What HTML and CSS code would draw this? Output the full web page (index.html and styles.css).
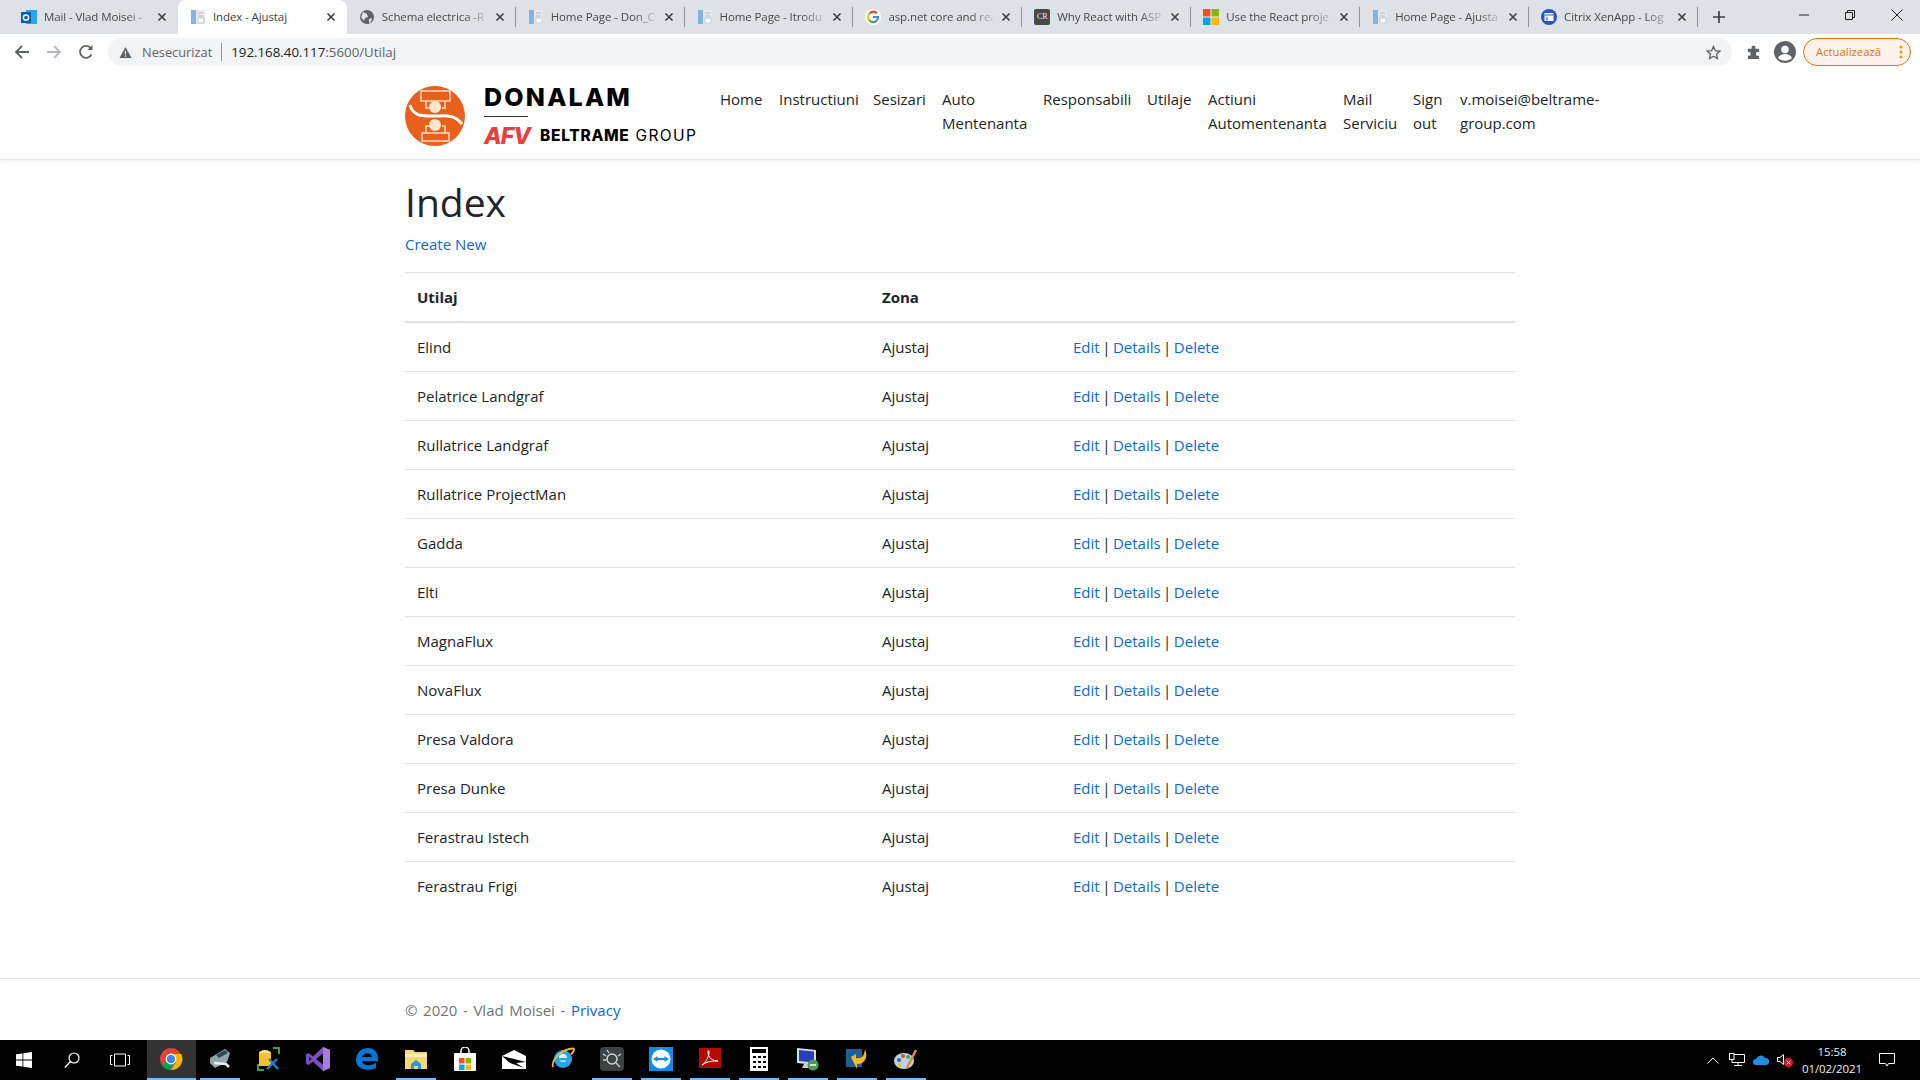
FILE: index.html
```html
<!DOCTYPE html>
<html lang="ro">
<head>
<meta charset="utf-8">
<title>Index - Ajustaj</title>
<link rel="stylesheet" href="styles.css">
</head>
<body>
<svg class="defs" width="0" height="0" aria-hidden="true">
  <symbol id="doc" viewBox="0 0 16 16">
    <rect x="1" y="1" width="5" height="14" fill="#7fb5e6"/>
    <rect x="6" y="1" width="9" height="14" fill="#e6e8eb"/>
    <path d="M8 4h5M8 7h5" stroke="#b9bec4" fill="none"/>
    <rect x="8" y="9" width="6" height="5" fill="#fff" stroke="#c4c8cd"/>
  </symbol>
  <symbol id="x" viewBox="0 0 10 10">
    <path d="M1.5 1.5l7 7M8.5 1.5l-7 7" stroke="#3c4043" stroke-width="1.6" fill="none"/>
  </symbol>
</svg>
<div class="screen">
  <header class="browser">
    <div class="tabstrip">
      <div class="tab">
        <svg class="favicon" viewBox="0 0 16 16"><rect x="5" y="1" width="11" height="14" fill="#28a8ea"/><rect x="0" y="3" width="10" height="11" fill="#0a5ea8"/><circle cx="5" cy="8.5" r="2.6" fill="none" stroke="#fff" stroke-width="1.5"/></svg>
        <span class="tab-title">Mail - Vlad Moisei -</span>
        <svg class="tab-close"><use href="#x"/></svg>
      </div>
      <div class="tab tab-active">
        <svg class="favicon"><use href="#doc"/></svg>
        <span class="tab-title plain">Index - Ajustaj</span>
        <svg class="tab-close"><use href="#x"/></svg>
      </div>
      <div class="tab tab-sep">
        <svg class="favicon" viewBox="0 0 16 16"><circle cx="8" cy="8" r="7" fill="#5f6368"/><path d="M4 3l4 2 1 3-3 1-1 3-3-4zM10 10l3-1-1 4-2 1z" fill="#dee1e6"/></svg>
        <span class="tab-title">Schema electrica -R</span>
        <svg class="tab-close"><use href="#x"/></svg>
      </div>
      <div class="tab tab-sep">
        <svg class="favicon"><use href="#doc"/></svg>
        <span class="tab-title">Home Page - Don_C</span>
        <svg class="tab-close"><use href="#x"/></svg>
      </div>
      <div class="tab tab-sep">
        <svg class="favicon"><use href="#doc"/></svg>
        <span class="tab-title">Home Page - Itrodu</span>
        <svg class="tab-close"><use href="#x"/></svg>
      </div>
      <div class="tab tab-sep">
        <svg class="favicon" viewBox="0 0 16 16"><circle cx="8" cy="8" r="8" fill="#fff"/><path d="M12 4.2A5 5 0 0 0 4.4 4.6" stroke="#ea4335" stroke-width="2.2" fill="none"/><path d="M4.4 4.6a5 5 0 0 0 0 6.8" stroke="#fbbc05" stroke-width="2.2" fill="none"/><path d="M4.4 11.4a5 5 0 0 0 7.4.2" stroke="#34a853" stroke-width="2.2" fill="none"/><path d="M8 8h5a5 5 0 0 1-1.2 3.6" stroke="#4285f4" stroke-width="2.2" fill="none"/></svg>
        <span class="tab-title">asp.net core and rea</span>
        <svg class="tab-close"><use href="#x"/></svg>
      </div>
      <div class="tab tab-sep">
        <span class="favicon fav-cr">CR</span>
        <span class="tab-title">Why React with ASP</span>
        <svg class="tab-close"><use href="#x"/></svg>
      </div>
      <div class="tab tab-sep">
        <svg class="favicon" viewBox="0 0 16 16"><rect width="7.4" height="7.4" fill="#f25022"/><rect x="8.6" width="7.4" height="7.4" fill="#7fba00"/><rect y="8.6" width="7.4" height="7.4" fill="#00a4ef"/><rect x="8.6" y="8.6" width="7.4" height="7.4" fill="#ffb900"/></svg>
        <span class="tab-title">Use the React proje</span>
        <svg class="tab-close"><use href="#x"/></svg>
      </div>
      <div class="tab tab-sep">
        <svg class="favicon"><use href="#doc"/></svg>
        <span class="tab-title">Home Page - Ajusta</span>
        <svg class="tab-close"><use href="#x"/></svg>
      </div>
      <div class="tab tab-sep">
        <svg class="favicon" viewBox="0 0 16 16"><circle cx="8" cy="8" r="8" fill="#2456c4"/><rect x="3.5" y="4" width="9" height="8" fill="#fff"/><rect x="3.5" y="5.5" width="9" height="1" fill="#2456c4"/><rect x="5.5" y="7.5" width="1" height="4.5" fill="#2456c4"/></svg>
        <span class="tab-title">Citrix XenApp - Log</span>
        <svg class="tab-close"><use href="#x"/></svg>
      </div>
      <svg class="new-tab" viewBox="0 0 12 12"><path d="M6 0v12M0 6h12" stroke="#3c4043" stroke-width="1.7" fill="none"/></svg>
      <div class="window-controls">
        <svg class="win-btn" viewBox="0 0 12 12"><path d="M1 6h10" stroke="#222" fill="none"/></svg>
        <svg class="win-btn" viewBox="0 0 12 12"><path d="M1.5 3.5h7v7h-7zM3.5 3.5v-2h7v7h-2" stroke="#222" fill="none"/></svg>
        <svg class="win-btn" viewBox="0 0 12 12"><path d="M.5.5l11 11M11.5.5l-11 11" stroke="#222" fill="none"/></svg>
      </div>
    </div>
    <div class="toolbar">
      <svg class="tool-icon" viewBox="0 0 16 16"><path d="M15 8H2M8 2L2 8l6 6" stroke="#5f6368" stroke-width="1.8" fill="none"/></svg>
      <svg class="tool-icon" viewBox="0 0 16 16"><path d="M1 8h13M8 2l6 6-6 6" stroke="#b4b7bb" stroke-width="1.8" fill="none"/></svg>
      <svg class="tool-icon" viewBox="0 0 16 16"><path d="M13.5 10.5A6 6 0 1 1 13 4.5" stroke="#5f6368" stroke-width="1.8" fill="none"/><path d="M14.5 1v5h-5z" fill="#5f6368"/></svg>
      <div class="omnibox">
        <svg class="warn" viewBox="0 0 14 14"><path d="M7 1l6.5 12H.5z" fill="#5f6368"/><path d="M7 5v4M7 10v1.6" stroke="#f1f3f4" stroke-width="1.4"/></svg>
        <span class="insecure">Nesecurizat</span>
        <span class="url">192.168.40.117<span class="url-dim">:5600/Utilaj</span></span>
        <svg class="star" viewBox="0 0 16 16"><path d="M8 1.6l2 4.4 4.8.5-3.6 3.2 1 4.7L8 12l-4.2 2.4 1-4.7L1.200 6.500 6 6z" stroke="#5f6368" stroke-width="1.400" fill="none"/></svg>
      </div>
      <svg class="puzzle" viewBox="0 0 16 16"><path d="M6 2.500a2 2 0 0 1 4 0V4h4v3.500h-1.500a2 2 0 0 0 0 4H14V15H2v-3.500h1a2 2 0 0 0 0-4H2V4h4z" fill="#5f6368"/></svg>
      <svg class="avatar" viewBox="0 0 22 22"><circle cx="11" cy="11" r="11" fill="#5f6368"/><circle cx="11" cy="8.500" r="3.800" fill="#fff"/><path d="M4 17c1.500-3 4-4 7-4s5.500 1 7 4c-3.500 3.500-10.500 3.500-14 0z" fill="#fff"/></svg>
      <div class="update-pill">
        <span>Actualizează</span>
        <svg class="dots" viewBox="0 0 4 16"><circle cx="2" cy="3" r="1.500"/><circle cx="2" cy="8" r="1.500"/><circle cx="2" cy="13" r="1.500"/></svg>
      </div>
    </div>
  </header>

  <div class="page">
    <nav class="navbar">
      <div class="container nav-inner">
        <div class="brand">
          <svg class="brand-mark" viewBox="0 0 60 60">
            <circle cx="30" cy="30" r="30" fill="#e8601c"/>
            <g fill="none" stroke="#ffe6d0" stroke-width="1.400">
              <rect x="16" y="5" width="29" height="10"/>
              <path d="M21 15v7h3M40 15v7h-3"/>
              <rect x="17" y="47" width="27" height="8"/>
              <path d="M21 47v-7h3M40 47v-7h-3"/>
            </g>
            <circle cx="30" cy="21" r="6" fill="#ffe6d0"/>
            <circle cx="30" cy="39" r="6" fill="#ffe6d0"/>
            <path d="M5 19c3 12 14 11 25 11s19-2 27 8" fill="none" stroke="#fff" stroke-width="3"/>
          </svg>
          <div class="brand-text">
            <span class="brand-name">DONALAM</span>
            <span class="brand-rule"></span>
            <div class="brand-group">
              <span class="brand-afv">AFV</span>
              <span class="brand-beltrame">BELTRAME</span>
              <span class="brand-gr">GROUP</span>
            </div>
          </div>
        </div>
        <ul class="nav-list">
          <li>Home</li>
          <li>Instructiuni</li>
          <li>Sesizari</li>
          <li>Auto<br>Mentenanta</li>
          <li>Responsabili</li>
          <li>Utilaje</li>
          <li>Actiuni<br>Automentenanta</li>
          <li>Mail<br>Serviciu</li>
          <li>Sign<br>out</li>
          <li>v.moisei@beltrame-<br>group.com</li>
        </ul>
      </div>
    </nav>

    <main class="container main">
      <h1 class="title">Index</h1>
      <p class="create"><a class="link" href="#">Create New</a></p>
      <table class="table">
        <thead>
          <tr><th class="col-a">Utilaj</th><th class="col-b">Zona</th><th></th></tr>
        </thead>
        <tbody>
          <tr><td>Elind</td><td>Ajustaj</td><td class="actions"><a class="link" href="#">Edit</a> | <a class="link" href="#">Details</a> | <a class="link" href="#">Delete</a></td></tr>
          <tr><td>Pelatrice Landgraf</td><td>Ajustaj</td><td class="actions"><a class="link" href="#">Edit</a> | <a class="link" href="#">Details</a> | <a class="link" href="#">Delete</a></td></tr>
          <tr><td>Rullatrice Landgraf</td><td>Ajustaj</td><td class="actions"><a class="link" href="#">Edit</a> | <a class="link" href="#">Details</a> | <a class="link" href="#">Delete</a></td></tr>
          <tr><td>Rullatrice ProjectMan</td><td>Ajustaj</td><td class="actions"><a class="link" href="#">Edit</a> | <a class="link" href="#">Details</a> | <a class="link" href="#">Delete</a></td></tr>
          <tr><td>Gadda</td><td>Ajustaj</td><td class="actions"><a class="link" href="#">Edit</a> | <a class="link" href="#">Details</a> | <a class="link" href="#">Delete</a></td></tr>
          <tr><td>Elti</td><td>Ajustaj</td><td class="actions"><a class="link" href="#">Edit</a> | <a class="link" href="#">Details</a> | <a class="link" href="#">Delete</a></td></tr>
          <tr><td>MagnaFlux</td><td>Ajustaj</td><td class="actions"><a class="link" href="#">Edit</a> | <a class="link" href="#">Details</a> | <a class="link" href="#">Delete</a></td></tr>
          <tr><td>NovaFlux</td><td>Ajustaj</td><td class="actions"><a class="link" href="#">Edit</a> | <a class="link" href="#">Details</a> | <a class="link" href="#">Delete</a></td></tr>
          <tr><td>Presa Valdora</td><td>Ajustaj</td><td class="actions"><a class="link" href="#">Edit</a> | <a class="link" href="#">Details</a> | <a class="link" href="#">Delete</a></td></tr>
          <tr><td>Presa Dunke</td><td>Ajustaj</td><td class="actions"><a class="link" href="#">Edit</a> | <a class="link" href="#">Details</a> | <a class="link" href="#">Delete</a></td></tr>
          <tr><td>Ferastrau Istech</td><td>Ajustaj</td><td class="actions"><a class="link" href="#">Edit</a> | <a class="link" href="#">Details</a> | <a class="link" href="#">Delete</a></td></tr>
          <tr><td>Ferastrau Frigi</td><td>Ajustaj</td><td class="actions"><a class="link" href="#">Edit</a> | <a class="link" href="#">Details</a> | <a class="link" href="#">Delete</a></td></tr>
        </tbody>
      </table>
    </main>

    <footer class="footer">
      <div class="container">© 2020 - Vlad Moisei - <a class="link" href="#">Privacy</a></div>
    </footer>
  </div>

  <div class="taskbar">
    <div class="task-start">
      <svg class="task-svg-16" viewBox="0 0 16 16"><path d="M0 2.300l6.500-.9v6.200H0zM7.300 1.300L16 0v7.600H7.300zM0 8.400h6.500v6.200L0 13.700zM7.300 8.400H16V16l-8.700-1.300z" fill="#fff"/></svg>
    </div>
    <div class="task-start task-search">
      <svg class="task-svg-16" viewBox="0 0 16 16"><circle cx="10" cy="6" r="5" stroke="#fff" stroke-width="1.200" fill="none"/><path d="M6.500 9.500L.8 15.500" stroke="#fff" stroke-width="1.300"/></svg>
    </div>
    <div class="task-start task-view">
      <svg class="task-svg-20" viewBox="0 0 20 14"><path d="M4.500 1h11v12h-11zM2.500 2.500H.5v9h2M17.500 2.500h2v9h-2" stroke="#fff" fill="none"/></svg>
    </div>
    <div class="task-apps">
      <div class="app app-chrome">
        <svg class="app-icon" viewBox="0 0 24 24"><circle cx="12" cy="12" r="11" fill="#db4437"/><path d="M12 12L2.500 17.500A11 11 0 0 0 12 23l5-11z" fill="#0f9d58"/><path d="M12 7h10.300A11 11 0 0 1 12 23l5-8z" fill="#f4b400"/><circle cx="12" cy="12" r="5.400" fill="#fff"/><circle cx="12" cy="12" r="4.200" fill="#4285f4"/></svg>
      </div>
      <div class="app app-on">
        <svg class="app-icon" viewBox="0 0 24 24"><path d="M2 11L17 2l5 4-3 9-12 6-5-5z" fill="#8fa6a6"/><path d="M8 8l9-5 3 3-9 5z" fill="#37474f"/><path d="M6 16l12 1 3 3" stroke="#e8eeee" stroke-width="2.500" fill="none"/></svg>
      </div>
      <div class="app">
        <svg class="app-icon" viewBox="0 0 24 24"><ellipse cx="8" cy="6" rx="6" ry="3" fill="#ffe082"/><path d="M2 6v13h12V6z" fill="#fbc02d"/><path d="M16 1h6v6M1 17v6h6" stroke="#43a047" stroke-width="2" fill="none"/><path d="M10 22l10-10M12 12l9 10" stroke="#0d8bd9" stroke-width="2.200"/></svg>
      </div>
      <div class="app">
        <svg class="app-icon" viewBox="0 0 24 24"><path d="M17 0l7 3v18l-7 3-10-9.500-4.500 3.500L0 16.500v-9L2.500 6 7 9.500z" fill="#7a4fbf"/><path d="M17 6.500v11L10 12z" fill="#000"/><path d="M3 9.500v5L5.500 12z" fill="#000"/><path d="M17 0l7 3v18l-7 3z" fill="#a77de0"/></svg>
      </div>
      <div class="app">
        <svg class="app-icon" viewBox="0 0 24 24"><path d="M1 13C1 6 6 1 13 1c6 0 10 4 10 11v2H7c.500 4 6 6 14 2v5c-9 4-20 1-20-8zM7 10h10c0-5-9-5-10 0z" fill="#0078d7"/></svg>
      </div>
      <div class="app app-on">
        <svg class="app-icon" viewBox="0 0 24 24"><path d="M1 3h8l2 2h12v17H1z" fill="#f7d774"/><rect x="1" y="7" width="22" height="3" fill="#ffeeb0"/><path d="M7 22v-5l5-4 5 4v5h-3v-3h-4v3z" fill="#1e9be0"/></svg>
      </div>
      <div class="app">
        <svg class="app-icon" viewBox="0 0 24 24"><rect x="1" y="6" width="22" height="18" rx="1" fill="#fff"/><path d="M8 9V4a4 4 0 0 1 8 0v5" stroke="#fff" stroke-width="1.500" fill="none"/><rect x="6" y="11" width="5.500" height="5.500" fill="#f25022"/><rect x="12.500" y="11" width="5.500" height="5.500" fill="#7fba00"/><rect x="6" y="17.500" width="5.500" height="5.500" fill="#00a4ef"/><rect x="12.500" y="17.500" width="5.500" height="5.500" fill="#ffb900"/></svg>
      </div>
      <div class="app">
        <svg class="app-icon" viewBox="0 0 24 24"><path d="M0 9l12-6 12 6v13H0z" fill="#fff"/><path d="M0 9l24 6-10 1 8 5-14-5z" fill="#000"/></svg>
      </div>
      <div class="app">
        <svg class="app-icon" viewBox="0 0 24 24"><circle cx="12" cy="12" r="9" fill="#2aa4e8"/><circle cx="12" cy="11" r="4" fill="#e6f6ff"/><rect x="7" y="11" width="13" height="2.500" fill="#2aa4e8"/><path d="M2 20C0 12 12 2 22 1.500c2 0 1 3-2 6" stroke="#f2b632" stroke-width="1.800" fill="none"/></svg>
      </div>
      <div class="app app-on">
        <svg class="app-icon" viewBox="0 0 24 24"><rect width="24" height="24" rx="4" fill="#3c4345"/><circle cx="12" cy="12" r="5" stroke="#cfd4d6" stroke-width="1.500" fill="none"/><path d="M16 16l4 4M3 7l3 2M3 13h3M7 3l2 3M21 7l-3 2" stroke="#cfd4d6" stroke-width="1.300"/></svg>
      </div>
      <div class="app app-on">
        <svg class="app-icon" viewBox="0 0 24 24"><rect width="24" height="24" fill="#0e8ee9"/><circle cx="12" cy="12" r="9.500" fill="#fff"/><path d="M4 12l4.500-3v2h7V9l4.500 3-4.500 3v-2h-7v2z" fill="#0e8ee9"/></svg>
      </div>
      <div class="app app-on">
        <svg class="app-icon" viewBox="0 0 24 24"><rect x="1" y="1" width="22" height="20" fill="#b30b00"/><path d="M4 18c4-2 7-9 7-13 0-2-1-2-1 0 0 6 5 9 10 9-4 0-11 0-16 4z" stroke="#fff" fill="none"/></svg>
      </div>
      <div class="app app-on">
        <svg class="app-icon" viewBox="0 0 24 24"><rect x="3" width="18" height="24" fill="#fff"/><rect x="5" y="2" width="14" height="4" fill="#000"/><g fill="#000"><rect x="6" y="9" width="3" height="2"/><rect x="11" y="9" width="3" height="2"/><rect x="16" y="9" width="3" height="2"/><rect x="6" y="14" width="3" height="2"/><rect x="11" y="14" width="3" height="2"/><rect x="16" y="14" width="3" height="2"/><rect x="6" y="19" width="3" height="2"/><rect x="11" y="19" width="3" height="2"/><rect x="16" y="19" width="3" height="2"/></g></svg>
      </div>
      <div class="app app-on">
        <svg class="app-icon" viewBox="0 0 24 24"><path d="M1 1l19 2v15L1 16z" fill="#d8dde0"/><path d="M3 3l15 1.500v11L3 14z" fill="#2a3fc4"/><path d="M8 17h8l1 4H6z" fill="#cfd2d4"/><circle cx="17" cy="18" r="5.500" fill="#4c9a5c"/><path d="M14 18h6" stroke="#fff" stroke-width="1.500"/></svg>
      </div>
      <div class="app app-on">
        <svg class="app-icon" viewBox="0 0 24 24"><path d="M1 2h16v18H1z" fill="#1e5f9a"/><path d="M6 10l5-3v4c5 1 8-1 9-9 3 7 1 15-8 15v5z" fill="#f9b81d"/></svg>
      </div>
      <div class="app app-on">
        <svg class="app-icon" viewBox="0 0 24 24"><ellipse cx="10" cy="14" rx="10" ry="8" fill="#bcd3e6"/><circle cx="5" cy="13" r="2" fill="#2a6bc4"/><circle cx="9" cy="9" r="2" fill="#e04b3a"/><circle cx="14" cy="10" r="2" fill="#4aa84f"/><circle cx="6" cy="18" r="2" fill="#f2c331"/><path d="M13 21L22 3" stroke="#d98f3a" stroke-width="2.500"/></svg>
      </div>
    </div>
    <div class="tray">
      <svg class="tray-chevron" viewBox="0 0 12 7"><path d="M.5 6.500L6 1l5.500 5.500" stroke="#fff" fill="none"/></svg>
      <svg class="tray-icon" viewBox="0 0 16 14"><path d="M3 1.500h12.500v8H3zM9 9.500v3M5 12.500h8" stroke="#fff" fill="none"/><rect x=".5" y=".5" width="4.500" height="6" fill="#000" stroke="#fff"/></svg>
      <svg class="tray-icon" viewBox="0 0 16 14"><path d="M3 12a3 3 0 0 1 0-6 5 5 0 0 1 9-1 3.500 3.500 0 0 1 1 7z" fill="#1f8fe0"/></svg>
      <svg class="tray-icon" viewBox="0 0 16 14"><path d="M.5 4.500h2.500l3.500-3v10l-3.500-3H.5z" stroke="#fff" fill="none"/><circle cx="11.500" cy="9.500" r="4.500" fill="#e81123"/><path d="M9.700 7.700l3.600 3.600M13.300 7.700l-3.600 3.600" stroke="#fff"/></svg>
      <div class="clock"><span>15:58</span><span>01/02/2021</span></div>
      <svg class="tray-icon tray-note" viewBox="0 0 16 14"><path d="M.5.500h15v10H9.500L8 13l-1.500-2.500H.5z" stroke="#fff" fill="none"/></svg>
    </div>
  </div>
</div>
</body>
</html>
```
FILE: styles.css
```css
* { box-sizing: border-box; }
html, body { margin: 0; height: 100%; overflow: hidden; }
body {
  font-family: "Open Sans", "Noto Sans", sans-serif;
  font-size: 15px;
  line-height: 24px;
  color: #212529;
  background: #fff;
}
.defs { display: block; height: 0; }
.screen { display: flex; flex-direction: column; height: 1080px; }

/* Browser chrome */
.browser { flex: none; height: 70px; display: flex; flex-direction: column; }
.tabstrip {
  height: 34px;
  background: #dee1e6;
  display: flex;
  align-items: stretch;
  padding-left: 9px;
  font-size: 11.5px;
  letter-spacing: -0.1px;
  color: #45494d;
}
.tab {
  flex: none;
  width: 168.9px;
  display: flex;
  align-items: center;
  padding: 0 11px 0 12px;
  position: relative;
}
.tab-active { background: #fff; border-radius: 8px 8px 0 0; color: #3c4043; }
.tab-sep::after {
  content: "";
  position: absolute;
  right: 0;
  top: 7px;
  height: 20px;
  width: 1px;
  background: #8f9296;
}
.favicon { flex: none; width: 16px; height: 16px; margin-right: 7px; }
.fav-cr {
  background: #47494b;
  color: #e8e8e8;
  font-size: 8px;
  line-height: 16px;
  text-align: center;
  border-radius: 2px;
  letter-spacing: 0;
  font-family: "Liberation Serif", serif;
}
.tab-title {
  flex: 1;
  min-width: 0;
  white-space: nowrap;
  -webkit-mask-image: linear-gradient(90deg, #000 78%, rgba(0, 0, 0, 0.15) 100%);
  mask-image: linear-gradient(90deg, #000 78%, rgba(0, 0, 0, 0.15) 100%);
}
.tab-title.plain { -webkit-mask-image: none; mask-image: none; }
.tab-close { flex: none; width: 10px; height: 10px; margin-left: 8px; }
.new-tab { flex: none; width: 12px; height: 12px; align-self: center; margin-left: 15px; }
.window-controls { margin-left: auto; display: flex; align-items: flex-start; }
.win-btn { width: 12px; height: 12px; margin: 9px 17px 0 17px; }
.window-controls .win-btn:first-child { margin-left: 0; }
.window-controls .win-btn:last-child { margin-right: 17px; margin-left: 18px; }

.toolbar {
  height: 36px;
  background: #fff;
  display: flex;
  align-items: center;
  padding: 0 7px 0 14px;
  font-size: 12.8px;
}
.tool-icon { flex: none; width: 16px; height: 16px; margin-right: 16px; }
.tool-icon:nth-child(3) { margin-right: 14px; }
.omnibox {
  flex: none;
  width: 1624px;
  height: 28px;
  background: #f1f3f4;
  border-radius: 14px;
  display: flex;
  align-items: center;
  padding: 0 10px 0 11px;
}
.warn { flex: none; width: 13px; height: 13px; margin-right: 10px; }
.insecure {
  padding-right: 9px;
  margin-right: 9px;
  border-right: 1px solid #8f9296;
  line-height: 18px;
  color: #5f6368;
}
.url { color: #202124; font-size: 13.3px; }
.url-dim { color: #5f6368; }
.star { flex: none; width: 15px; height: 15px; margin-left: auto; margin-right: 1px; }
.puzzle { flex: none; width: 15px; height: 15px; margin-left: 14px; }
.avatar { flex: none; width: 22px; height: 22px; margin-left: 13px; }
.update-pill {
  flex: none;
  width: 108px;
  height: 28px;
  margin-left: 7px;
  border: 1px solid #e8710a;
  border-radius: 14px;
  background: #fdf2e9;
  color: #e8710a;
  display: flex;
  align-items: center;
  justify-content: space-between;
  padding: 0 7px 0 12px;
  font-size: 11.3px;
}
.dots { width: 4px; height: 16px; fill: #f29900; }

/* Page */
.page { flex: 1; min-height: 0; display: flex; flex-direction: column; }
.container { width: 1140px; margin: 0 auto; padding: 0 15px; }
.navbar {
  flex: none;
  height: 90px;
  border-bottom: 1px solid #e3e5e8;
  box-shadow: 0 1px 3px rgba(0, 0, 0, 0.06);
}
.nav-inner { display: flex; align-items: flex-start; }
.brand {
  flex: none;
  width: 315px;
  display: flex;
  padding-top: 16px;
}
.brand-mark { flex: none; width: 60px; height: 60px; }
.brand-text {
  margin-left: 19px;
  display: flex;
  flex-direction: column;
  font-family: "Inter", sans-serif;
  color: #000;
}
.brand-name { font-size: 25px; font-weight: 800; line-height: 22px; letter-spacing: 2.2px; }
.brand-rule { width: 44px; height: 1px; background: #333; margin-top: 8px; }
.brand-group { display: flex; align-items: center; margin-top: 9px; height: 20px; white-space: nowrap; }
.brand-afv {
  width: 44px;
  font-size: 23px;
  font-weight: 800;
  font-style: italic;
  color: #ee3b3b;
  line-height: 20px;
  letter-spacing: -1px;
}
.brand-beltrame { margin-left: 12px; font-size: 15.5px; font-weight: 800; line-height: 20px; letter-spacing: 0.7px; }
.brand-gr { margin-left: 6px; font-size: 15.5px; font-weight: 400; line-height: 20px; letter-spacing: 1.4px; }
.nav-list {
  list-style: none;
  margin: 17px 0 0;
  padding: 0;
  display: grid;
  grid-template-columns: 59px 94px 69px 101px 104px 61px 135px 70px 47px 150px;
  white-space: nowrap;
}

.main { flex: none; padding-top: 16px; }
.title { margin: 0 0 8px; padding-top: 3px; font-size: 39px; font-weight: 500; line-height: 45px; }
.create { margin: 0 0 16px; }
.link { color: #0a69de; text-decoration: none; }
.table { width: 1110px; border-collapse: collapse; table-layout: fixed; }
.table th, .table td { padding: 12px; text-align: left; border-top: 1px solid #dee2e6; vertical-align: top; }
.table thead th { border-bottom: 2px solid #dee2e6; font-weight: 700; padding-bottom: 11px; height: 49px; }
.table tbody tr:first-child td { border-top: 0; }
.table td { height: 49px; }
.table .actions { padding-left: 11px; word-spacing: -1.4px; }
.col-a { width: 465px; }
.col-b { width: 192px; }

.footer {
  margin-top: auto;
  flex: none;
  height: 62px;
  border-top: 1px solid #dee2e6;
  line-height: 62px;
  color: #6c757d;
  word-spacing: 1.7px;
}

/* Taskbar */
.taskbar {
  flex: none;
  height: 40px;
  background: #000;
  display: flex;
  align-items: stretch;
  position: relative;
}
.task-start { flex: none; width: 48px; display: flex; align-items: center; justify-content: center; }
.task-view { width: 51px; padding-right: 3px; }
.task-svg-16 { width: 16px; height: 16px; }
.task-svg-20 { width: 20px; height: 14px; }
.task-apps { display: flex; }
.app {
  flex: none;
  width: 49px;
  display: flex;
  align-items: center;
  justify-content: center;
  position: relative;
}
.app-icon { width: 24px; height: 24px; margin: 0 2px 2px 0; }
.app-on::after {
  content: "";
  position: absolute;
  left: 4px;
  right: 5px;
  bottom: 0;
  height: 2px;
  background: #76b9ed;
}
.app-chrome { background: #333; }
.app-chrome::after {
  content: "";
  position: absolute;
  left: 0;
  right: 0;
  bottom: 0;
  height: 2px;
  background: #76b9ed;
}
.tray {
  margin-left: auto;
  display: flex;
  align-items: center;
  padding-right: 25px;
  color: #fff;
}
.tray-chevron { width: 12px; height: 7px; margin-right: 10px; }
.tray-icon { width: 16px; height: 14px; margin-right: 8px; }
.clock {
  width: 62px;
  margin: 0 16px 0 0;
  display: flex;
  flex-direction: column;
  align-items: center;
  font-size: 11.5px;
  line-height: 17px;
  letter-spacing: -0.1px;
  color: #eee;
}
.tray-note { margin: 0; }
```
